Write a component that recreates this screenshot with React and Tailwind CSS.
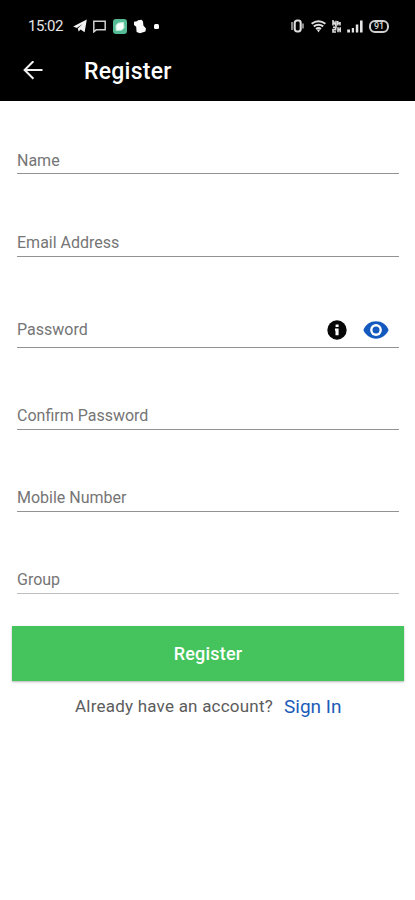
const fields = [
  { label: 'Name', row: 'h-[73px] pb-[3px]' },
  { label: 'Email Address', row: 'h-[83px] pb-[4px]' },
  { label: 'Password', row: 'h-[91px] pb-[8px]', secure: true },
  { label: 'Confirm Password', row: 'h-[82px] pb-[4px]' },
  { label: 'Mobile Number', row: 'h-[82px] pb-[4px]' },
  { label: 'Group', row: 'h-[82px] pb-[4px]', light: true },
]

function StatusBar() {
  return (
    <div className="flex h-[52px] items-center pl-[28px] text-[#e6e6e6]">
      <span className="w-[45px] text-[15px] leading-none tracking-[-0.5px]">15:02</span>
      <svg className="h-[14px] w-[14px]" viewBox="0 0 14 14" fill="#f2f2f2">
        <path d="M0.2 7.6 13.8 0.6 11.6 13.2 7.6 10.4 5.6 12.6 4.8 9.4 9.6 4.9 3.8 8.9Z" />
      </svg>
      <svg className="ml-[6px] h-[13px] w-[13px]" viewBox="0 0 13 13" fill="none" stroke="#d0d0d0" strokeWidth="1.5">
        <path d="M.8 1.2h11.4v8.6H3.2L.8 11.8Z" />
      </svg>
      <svg className="ml-[7px] h-[15px] w-[14px]" viewBox="0 0 14 15">
        <rect width="14" height="15" rx="3" fill="#55bb95" />
        <path d="M3 6.5 5 4.2 10.5 3.4 11 8.5 9 11 3.2 11.5Z" fill="#f5fffb" stroke="#c3eedc" strokeLinejoin="round" />
      </svg>
      <svg className="ml-[7px] h-[15px] w-[12px]" viewBox="0 0 12 15" fill="#fafafa">
        <path d="M0 2.8 3 2.2 4 1.2 7.6 .8 9 2.4 9.4 6.4 12 9.4 11.4 12.4 6 14.2 2.6 13 2.2 7.8 0 6Z" />
      </svg>
      <span className="ml-[8px] h-[5px] w-[5px] rounded-[1.5px] bg-white" />

      <div className="ml-auto flex items-center pr-[26px]">
        <svg className="h-[14px] w-[13px]" viewBox="0 0 13 14" fill="none" stroke="#dedede">
          <rect x="3.7" y="1.5" width="6" height="11" rx="2.4" strokeWidth="2.1" />
          <path d="M1 3v8M12 4.5v5" strokeWidth="1.2" />
        </svg>
        <svg className="ml-[7px] h-[13px] w-[15px]" viewBox="0 0 15 13" fill="none" stroke="#e0e0e0" strokeWidth="2">
          <path d="M.6 3.8Q7.5-1.4 14.4 3.8M2.8 6.4Q7.5 3 12.2 6.4M5 9Q7.5 7.2 10 9" />
          <path d="M5.8 9.4h3.4L7.5 12.6Z" fill="#e0e0e0" stroke="none" />
        </svg>
        <svg className="ml-[6px] h-[13px] w-[9px]" viewBox="0 0 9 13" fill="none" stroke="#dcdcdc" strokeWidth="1.6">
          <path d="M1 5.6V.8L4 5.6V.8M5.8 1v4.6M5.6 3.2H8M8 2v3.6M1 7.2h2.6v2.4H1v2.4h3M6 7.2v5M8.2 7.2v5M6 9.6h2" />
        </svg>
        <svg className="ml-[6px] h-[13px] w-[16px]" viewBox="0 0 16 13" fill="#e4e4e4">
          <path d="M.2 9.5H3V12.5H.2ZM4.8 8H7V12.5H4.8ZM8.8 4.5h2.5v8H8.8ZM13 .5h2.6v12H13Z" />
        </svg>
        <span className="ml-[6px] flex h-[13px] w-[20px] items-center justify-center rounded-[6px] border-2 border-[#cfcfcf] text-[9px] leading-none font-medium text-[#d8d8d8]">
          91
        </span>
      </div>
    </div>
  )
}

function Header() {
  return (
    <header className="h-[101px] bg-black text-white">
      <StatusBar />
      <div className="flex h-[38px] items-center pl-[23px]">
        <svg className="h-[20px] w-[20px]" viewBox="0 0 20 20" fill="none" stroke="#f0f0f0" strokeWidth="2">
          <path d="M19.5 9H2M10.4 .2 1.6 9l8.8 8.8" />
        </svg>
        <h1 className="ml-[41px] pt-[1px] text-[23px] leading-none font-medium tracking-[0.25px]">Register</h1>
      </div>
    </header>
  )
}

function PasswordIcons() {
  return (
    <div className="mb-[-1px] flex items-center pr-[10px]">
      <svg className="h-[20px] w-[20px]" viewBox="0 0 20 20">
        <circle cx="10" cy="10" r="9.7" fill="#080808" />
        <path d="M8.6 4.4h3v2.5h-3ZM8 8.5h3.6v6.8H8.5v-4.6H8Z" fill="#fff" />
      </svg>
      <svg className="ml-[16px] h-[18px] w-[26px]" viewBox="0 0 26 18">
        <path
          d="M.4 9C2.6 3.7 7.4.3 13 .3S23.4 3.7 25.6 9C23.4 14.3 18.6 17.7 13 17.7S2.6 14.3.4 9Z"
          fill="#1459bd"
        />
        <circle cx="13" cy="9" r="5.9" fill="#fff" />
        <circle cx="13" cy="9" r="3.5" fill="#1459bd" />
      </svg>
    </div>
  )
}

function Field({ field }) {
  return (
    <div
      className={`flex items-end justify-between border-b ${field.light ? 'border-[#bdbdbd]' : 'border-[#929292]'} ${field.row}`}
    >
      <label className="text-[16px] leading-[19px] text-[#757575]">{field.label}</label>
      {field.secure && <PasswordIcons />}
    </div>
  )
}

export default function App() {
  return (
    <div className="h-[900px] w-full overflow-hidden bg-white font-[Roboto,sans-serif]">
      <Header />
      <form className="pr-[16px] pl-[17px]">
        {fields.map((field) => (
          <Field key={field.label} field={field} />
        ))}
      </form>
      <div className="pt-[32px] pr-[11px] pl-[12px]">
        <button
          type="button"
          className="block h-[55px] w-full bg-[#45c35c] text-[18px] font-medium tracking-[0.2px] text-white shadow-[0_1px_2px_rgba(0,0,0,0.3)]"
        >
          Register
        </button>
      </div>
      <p className="mt-[13px] flex items-center pl-[75px] text-[17px] leading-[22px] text-[#5c5c5c]">
        <span className="tracking-[0.22px]">Already have an account?</span>
        <a href="#" className="ml-[11px] pt-[2px] text-[19px] text-[#1b5cb8]">
          Sign In
        </a>
      </p>
    </div>
  )
}
